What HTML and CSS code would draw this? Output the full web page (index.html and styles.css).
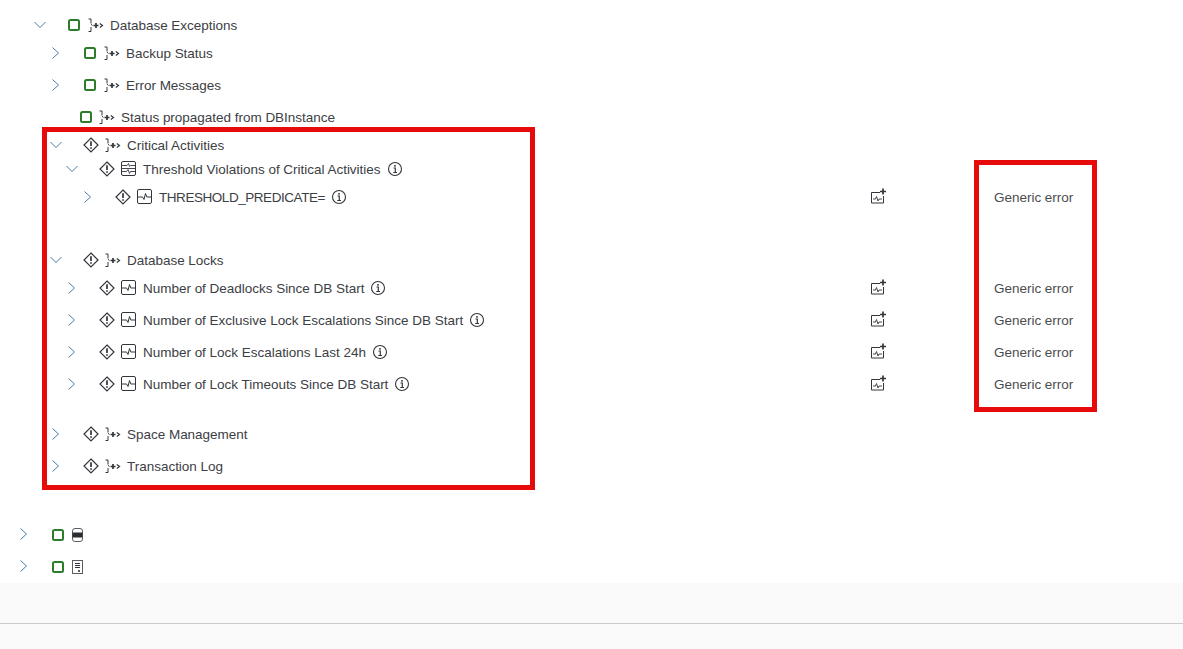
FILE: index.html
```html
<!DOCTYPE html>
<html lang="en">
<head>
<meta charset="utf-8">
<title>Database Exceptions</title>
<link rel="stylesheet" href="styles.css">
</head>
<body>
<svg class="defs" width="0" height="0" aria-hidden="true">
  <symbol id="right" viewBox="0 0 16 16"><path d="M4.500 2.500 10.500 8 4.500 13.500" fill="none" stroke="#4a78a6" stroke-width="1"/></symbol>
  <symbol id="down" viewBox="0 0 16 16"><path d="M2.500 5 8 10.500 13.500 5" fill="none" stroke="#4a78a6" stroke-width="1"/></symbol>
  <symbol id="ok" viewBox="0 0 14 14"><rect x="2" y="2" width="10" height="10" rx="1.500" fill="none" stroke="#2b7d2b" stroke-width="2"/></symbol>
  <symbol id="warn" viewBox="0 0 16 16"><path d="M8 1 15 8 8 15 1 8Z" fill="none" stroke="#32363a" stroke-width="1.200"/><path d="M8 4.300V9M8 10.200V11.800" stroke="#32363a" stroke-width="1.700"/></symbol>
  <symbol id="proc" viewBox="0 0 16 16"><path d="M.5 2H3V6.500M4.500 8.500 3 7.300M3 10V14.500H.5" fill="none" stroke="#32363a" stroke-width="1"/><path d="M5.500 8.500H10.500M8 6V11" stroke="#32363a" stroke-width="1.700"/><path d="M11.800 6.500 14.500 8.500 11.800 10.500" fill="none" stroke="#32363a" stroke-width="1.200"/></symbol>
  <symbol id="metric" viewBox="0 0 16 16"><rect x=".5" y=".5" width="14" height="14" rx="1.500" fill="none" stroke="#32363a"/><path d="M.5 8H5.500L7 10.500 8.500 4.500 9.800 8H14.500" fill="none" stroke="#32363a"/></symbol>
  <symbol id="group" viewBox="0 0 16 16"><rect x=".5" y=".5" width="14" height="14" rx="1.500" fill="none" stroke="#32363a"/><path d="M1 4.500H6L7.500 2.500 8.500 5.500 9.500 4.500H14M1 7.500H14M1 10.500H5.500L7 8.500 8.500 12.500 9.500 10.500H14" fill="none" stroke="#32363a" stroke-width=".9"/></symbol>
  <symbol id="info" viewBox="0 0 16 16"><circle cx="8" cy="8" r="6.500" fill="none" stroke="#32363a" stroke-width="1.100"/><path d="M6.500 7H8.300V11.500M6.300 11.500H10" fill="none" stroke="#32363a" stroke-width="1.200"/><path d="M8 4V5.700" stroke="#32363a" stroke-width="1.500"/></symbol>
  <symbol id="chart" viewBox="0 0 16 16"><path d="M10 4.500H1.500V15H13.500V8" fill="none" stroke="#32363a"/><path d="M3 11H5.500L6.500 8.500 8 13 9 11H12" fill="none" stroke="#32363a" stroke-width=".9"/><path d="M13 .5V6.500M10 3.500H16" stroke="#32363a" stroke-width="1.700"/></symbol>
  <symbol id="db" viewBox="0 0 12 14"><rect x=".5" y=".5" width="10" height="13" rx="2.500" fill="none" stroke="#5a5e62"/><rect x=".5" y="4.500" width="10" height="5" fill="#2b2e31"/></symbol>
  <symbol id="doc" viewBox="0 0 12 14"><rect x=".5" y=".5" width="10" height="13" fill="none" stroke="#5a5e62"/><path d="M3 3.500H8M3 5.500H8M3 7.500H8" stroke="#32363a"/><rect x="6" y="10" width="2" height="2" fill="#5a5e62"/></symbol>
</svg>

<main class="tree">
  <div class="row h28 l1">
    <div class="cell-tree"><svg class="chev"><use href="#down"/></svg><svg class="status"><use href="#ok"/></svg><svg class="ico"><use href="#proc"/></svg><span class="label">Database Exceptions</span></div>
  </div>
  <div class="row h32 l2">
    <div class="cell-tree"><svg class="chev"><use href="#right"/></svg><svg class="status"><use href="#ok"/></svg><svg class="ico"><use href="#proc"/></svg><span class="label">Backup Status</span></div>
  </div>
  <div class="row h32 l2">
    <div class="cell-tree"><svg class="chev"><use href="#right"/></svg><svg class="status"><use href="#ok"/></svg><svg class="ico"><use href="#proc"/></svg><span class="label">Error Messages</span></div>
  </div>
  <div class="row h28 leaf">
    <div class="cell-tree"><svg class="status"><use href="#ok"/></svg><svg class="ico"><use href="#proc"/></svg><span class="label">Status propagated from DBInstance</span></div>
  </div>
  <div class="row h24 l2 warn">
    <div class="cell-tree"><svg class="chev"><use href="#down"/></svg><svg class="status"><use href="#warn"/></svg><svg class="ico"><use href="#proc"/></svg><span class="label">Critical Activities</span></div>
  </div>
  <div class="row h28 l3 warn">
    <div class="cell-tree"><svg class="chev"><use href="#down"/></svg><svg class="status"><use href="#warn"/></svg><svg class="ico"><use href="#group"/></svg><span class="label">Threshold Violations of Critical Activities</span><svg class="info"><use href="#info"/></svg></div>
  </div>
  <div class="row h63 l4 warn">
    <div class="cell-tree"><svg class="chev"><use href="#right"/></svg><svg class="status"><use href="#warn"/></svg><svg class="ico"><use href="#metric"/></svg><span class="label caps">THRESHOLD_PREDICATE=</span><svg class="info"><use href="#info"/></svg></div>
    <div class="cell-chart"><svg class="chart"><use href="#chart"/></svg></div>
    <div class="cell-value">Generic error</div>
  </div>
  <div class="row h28 l2 warn">
    <div class="cell-tree"><svg class="chev"><use href="#down"/></svg><svg class="status"><use href="#warn"/></svg><svg class="ico"><use href="#proc"/></svg><span class="label">Database Locks</span></div>
  </div>
  <div class="row h32 l3 warn">
    <div class="cell-tree"><svg class="chev"><use href="#right"/></svg><svg class="status"><use href="#warn"/></svg><svg class="ico"><use href="#metric"/></svg><span class="label">Number of Deadlocks Since DB Start</span><svg class="info"><use href="#info"/></svg></div>
    <div class="cell-chart"><svg class="chart"><use href="#chart"/></svg></div>
    <div class="cell-value">Generic error</div>
  </div>
  <div class="row h32 l3 warn">
    <div class="cell-tree"><svg class="chev"><use href="#right"/></svg><svg class="status"><use href="#warn"/></svg><svg class="ico"><use href="#metric"/></svg><span class="label">Number of Exclusive Lock Escalations Since DB Start</span><svg class="info"><use href="#info"/></svg></div>
    <div class="cell-chart"><svg class="chart"><use href="#chart"/></svg></div>
    <div class="cell-value">Generic error</div>
  </div>
  <div class="row h32 l3 warn">
    <div class="cell-tree"><svg class="chev"><use href="#right"/></svg><svg class="status"><use href="#warn"/></svg><svg class="ico"><use href="#metric"/></svg><span class="label">Number of Lock Escalations Last 24h</span><svg class="info"><use href="#info"/></svg></div>
    <div class="cell-chart"><svg class="chart"><use href="#chart"/></svg></div>
    <div class="cell-value">Generic error</div>
  </div>
  <div class="row h50 l3 warn">
    <div class="cell-tree"><svg class="chev"><use href="#right"/></svg><svg class="status"><use href="#warn"/></svg><svg class="ico"><use href="#metric"/></svg><span class="label">Number of Lock Timeouts Since DB Start</span><svg class="info"><use href="#info"/></svg></div>
    <div class="cell-chart"><svg class="chart"><use href="#chart"/></svg></div>
    <div class="cell-value">Generic error</div>
  </div>
  <div class="row h32 l2 warn">
    <div class="cell-tree"><svg class="chev"><use href="#right"/></svg><svg class="status"><use href="#warn"/></svg><svg class="ico"><use href="#proc"/></svg><span class="label">Space Management</span></div>
  </div>
  <div class="row h68 l2 warn">
    <div class="cell-tree"><svg class="chev"><use href="#right"/></svg><svg class="status"><use href="#warn"/></svg><svg class="ico"><use href="#proc"/></svg><span class="label">Transaction Log</span></div>
  </div>
  <div class="row h32 l0">
    <div class="cell-tree"><svg class="chev"><use href="#right"/></svg><svg class="status"><use href="#ok"/></svg><svg class="ico small"><use href="#db"/></svg></div>
  </div>
  <div class="row h17 l0">
    <div class="cell-tree"><svg class="chev"><use href="#right"/></svg><svg class="status"><use href="#ok"/></svg><svg class="ico small"><use href="#doc"/></svg></div>
  </div>
</main>

<footer class="footer"><div class="footer-line"></div></footer>

<div class="mark mark-tree"></div>
<div class="mark mark-value"></div>
</body>
</html>
```

FILE: styles.css
```css
* { box-sizing: border-box; }
html, body { margin: 0; padding: 0; }
body {
  position: relative;
  width: 1183px;
  height: 649px;
  overflow: hidden;
  background: #fff;
  color: #3c4044;
  font-family: "Liberation Sans", Arial, sans-serif;
  font-size: 13.5px;
  letter-spacing: -0.02px;
  display: flex;
  flex-direction: column;
}
.defs { position: absolute; }
.tree { height: 583px; padding-top: 13px; }
.row { display: flex; align-items: flex-start; }
.h17 { height: 17px; }
.h24 { height: 24px; }
.h28 { height: 28px; }
.h32 { height: 32px; }
.h50 { height: 50px; }
.h63 { height: 63px; }
.h68 { height: 68px; }

.cell-tree { width: 870px; height: 24px; display: flex; align-items: center; flex: none; }
.l0 .cell-tree { padding-left: 16px; }
.l1 .cell-tree { padding-left: 32px; }
.l2 .cell-tree { padding-left: 48px; }
.l3 .cell-tree { padding-left: 64px; }
.l4 .cell-tree { padding-left: 80px; }
.leaf .cell-tree { padding-left: 79px; }

.chev { width: 16px; height: 16px; flex: none; margin-right: 19px; }
.status { width: 14px; height: 14px; flex: none; }
.warn .status { width: 16px; height: 16px; }
.ico { width: 16px; height: 16px; flex: none; margin-left: 7px; }
.warn .ico { margin-left: 6px; }
.leaf .ico { margin-left: 6px; }
.ico.small { width: 12px; height: 14px; }
.l0 .status, .l0 .ico { margin-top: 2px; }
.label { margin: 2px 0 0 6px; line-height: 24px; white-space: nowrap; }
.label.caps { letter-spacing: -0.45px; }
.info { width: 16px; height: 16px; flex: none; margin-left: 6px; }

.cell-chart { width: 124px; height: 24px; display: flex; align-items: flex-start; padding-top: 3px; flex: none; }
.chart { width: 16px; height: 16px; }
.cell-value { line-height: 24px; padding-top: 1px; white-space: nowrap; color: #4a4d50; }

.footer { flex: 1; background: #fafafa; padding-top: 40px; }
.footer-line { height: 1px; background: #cccccc; }

.mark { position: absolute; border: 5px solid #e60a0a; }
.mark-tree { left: 42px; top: 127px; width: 493px; height: 363px; }
.mark-value { left: 974px; top: 160px; width: 123px; height: 252px; }
```
